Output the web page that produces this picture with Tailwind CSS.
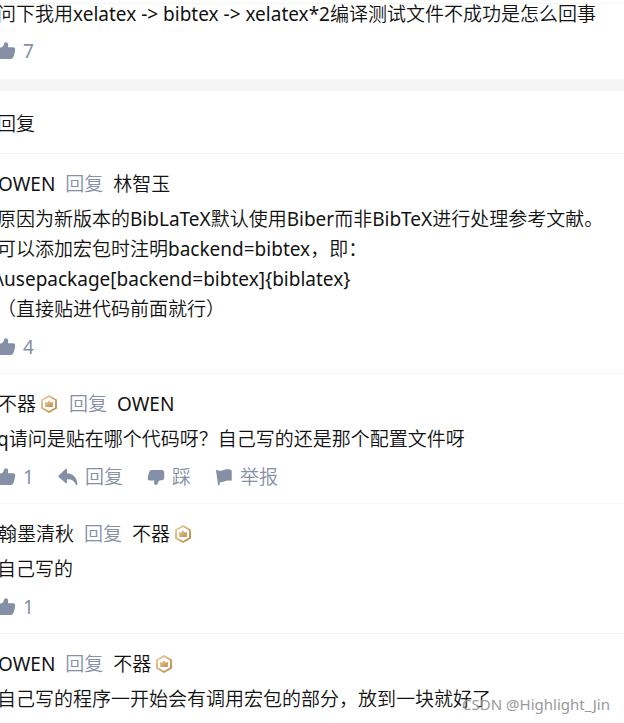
<!DOCTYPE html>
<html lang="zh-CN">
<head>
<meta charset="utf-8">
<meta name="viewport" content="width=device-width, initial-scale=1">
<title>回复</title>
<script src="https://cdn.jsdelivr.net/npm/@tailwindcss/browser@4"></script>
</head>
<body class="bg-white text-[#121212] text-[19px] leading-[30px] font-['Noto_Sans','Noto_Sans_CJK_SC_DemiLight','Noto_Sans_CJK_SC_Light','Noto_Sans_CJK_SC',sans-serif]">
<svg class="absolute size-0" aria-hidden="true">
  <defs>
    <linearGradient id="gold" x1="0" y1="0" x2="1" y2="1"><stop offset="0" stop-color="#ecd0a4"/><stop offset="1" stop-color="#bd8844"/></linearGradient>
    <symbol id="like" viewBox="0 0 24 24"><path d="M9.300 4.200C9.700 2.400 10.800 1.500 12 1.500c1.700 0 2.700 1.400 2.600 3.200L14.300 7.500h6.200c1.800 0 2.700 1.200 2.500 3-.3 3-1 5.900-2.100 8.600-.6 1.500-1.700 2.400-3.500 2.400H4.500C2.600 21.500 1 20 1 18v-7c0-2 1.500-3.300 3.500-3.300h1.500C7.900 7.300 8.800 6.200 9.300 4.200z"/></symbol>
    <symbol id="reply" viewBox="0 0 24 24"><path d="M10.800 3.200c0-.9-1-1.400-1.700-.8L.8 10.200a1.200 1.200 0 0 0 0 1.700l8.300 7.400c.7.600 1.700.1 1.700-.8v-3.800c5.200-.4 8.600 1.700 10.600 6.300.5 1 1.900.8 1.900-.4C22.900 12.800 18.200 8 10.800 7.400z"/></symbol>
    <symbol id="flag" viewBox="0 0 24 24"><path d="M1.400 3.600C1.200 2.500 2.200 2 3.100 2.600c2.200 1.400 4.700 1.600 7.400.5 3-1.300 6.700-1.700 10.300-.8 1 .2 1.500.8 1.500 1.700v11.500c0 1.100-.8 1.600-1.800 1.400-3-.6-5.500-.2-8.300 1.100-2 .9-4 1.200-5.900.9V22c0 .8-.5 1.200-1.200 1.200S4 22.800 4 22z"/></symbol>
    <symbol id="medal" viewBox="0 0 20 20"><path d="M10 2l7 4v8l-7 4-7-4V6z" fill="none" stroke="url(#gold)" stroke-width="2" stroke-linejoin="round"/><path d="M5.800 7.500l2.100 1.200L10 6.200l2.100 2.500 2.100-1.200-.5 5.500H6.300z" fill="url(#gold)"/></symbol>
  </defs>
</svg>
<main class="relative overflow-hidden pb-2">
  <section class="pt-[3px]">
    <div class="border-t border-[#f5f5f5] pb-[15px]">
      <p class="-ml-[3px] leading-5 whitespace-nowrap">问下我用xelatex -&gt; bibtex -&gt; xelatex*2编译测试文件不成功是怎么回事</p>
      <div class="mt-3.5 -ml-1 flex h-[26px] items-center text-[#8590a6]">
        <button type="button" class="flex items-center gap-[7px]"><svg class="size-5 fill-current"><use href="#like"/></svg>7</button>
      </div>
    </div>
  </section>
  <div class="h-3 bg-[#f5f5f5]"></div>
  <section>
    <h1 class="-ml-[3px] flex h-[62px] items-center pt-1">回复</h1>

    <article class="border-t border-[#f5f5f5] pt-[15px] pb-[13px]">
      <header class="-ml-[2px] flex items-center gap-2.5"><a href="#">OWEN</a><span class="text-[#8590a6]">回复</span><a href="#">林智玉</a></header>
      <p class="mt-[5px] -ml-[3px] whitespace-nowrap">原因为新版本的BibLaTeX默认使用Biber而非BibTeX进行处理参考文献。<br>可以添加宏包时注明backend=bibtex，即：<br>\usepackage[backend=bibtex]{biblatex}<br>（直接贴进代码前面就行）</p>
      <div class="mt-2.5 -ml-1 flex h-[26px] items-center text-[#8590a6]">
        <button type="button" class="flex items-center gap-[7px]"><svg class="size-5 fill-current"><use href="#like"/></svg>4</button>
      </div>
    </article>

    <article class="border-t border-[#f5f5f5] pt-[15px] pb-[13px]">
      <header class="-ml-[2px] flex items-center gap-2.5"><span class="flex items-center gap-[3px]"><a href="#">不器</a><svg class="size-5"><use href="#medal"/></svg></span><span class="text-[#8590a6]">回复</span><a href="#">OWEN</a></header>
      <p class="mt-[5px] -ml-[3px] whitespace-nowrap">q请问是贴在哪个代码呀？自己写的还是那个配置文件呀</p>
      <div class="mt-2.5 -ml-1 flex h-[26px] items-center gap-6 text-[#8590a6]">
        <button type="button" class="flex items-center gap-[7px]"><svg class="size-5 fill-current"><use href="#like"/></svg>1</button>
        <button type="button" class="flex items-center gap-[7px]"><svg class="size-5 fill-current"><use href="#reply"/></svg>回复</button>
        <button type="button" class="flex items-center gap-[7px]"><svg class="size-[18px] rotate-180 fill-current"><use href="#like"/></svg>踩</button>
        <button type="button" class="flex items-center gap-[7px]"><svg class="size-[18px] fill-current"><use href="#flag"/></svg>举报</button>
      </div>
    </article>

    <article class="border-t border-[#f5f5f5] pt-[15px] pb-[13px]">
      <header class="-ml-[2px] flex items-center gap-2.5"><a href="#">翰墨清秋</a><span class="text-[#8590a6]">回复</span><span class="flex items-center gap-[3px]"><a href="#">不器</a><svg class="size-5"><use href="#medal"/></svg></span></header>
      <p class="mt-[5px] -ml-[3px] whitespace-nowrap">自己写的</p>
      <div class="mt-2.5 -ml-1 flex h-[26px] items-center text-[#8590a6]">
        <button type="button" class="flex items-center gap-[7px]"><svg class="size-5 fill-current"><use href="#like"/></svg>1</button>
      </div>
    </article>

    <article class="border-t border-[#f5f5f5] pt-[15px]">
      <header class="-ml-[2px] flex items-center gap-2.5"><a href="#">OWEN</a><span class="text-[#8590a6]">回复</span><span class="flex items-center gap-[3px]"><a href="#">不器</a><svg class="size-5"><use href="#medal"/></svg></span></header>
      <p class="mt-[5px] -ml-[3px] whitespace-nowrap">自己写的程序一开始会有调用宏包的部分，放到一块就好了</p>
    </article>
  </section>
  <div class="absolute right-3.5 bottom-2 text-[15px] leading-5 text-[#999999]">CSDN @Highlight_Jin</div>
</main>
</body>
</html>
